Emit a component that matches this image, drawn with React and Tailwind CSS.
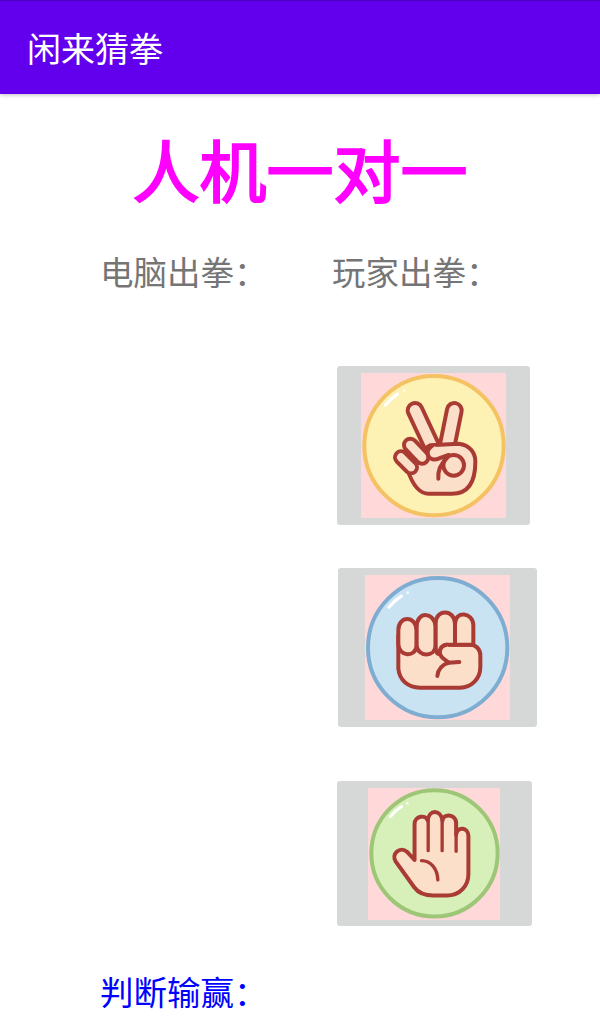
const INK = "#a93b34";
const SKIN = "#fcdfc8";

function Ball({ cx, cy, r, fill, ring }) {
  return (
    <>
      <circle cx={cx} cy={cy} r={r} fill={fill} stroke={ring} strokeWidth="12" />
      <path d={`M${cx - r * 0.7} ${cy - r * 0.58} Q${cx - r * 0.62} ${cy - r * 0.68} ${cx - r * 0.52} ${cy - r * 0.74}`} fill="none" stroke="#fff" strokeWidth="9" strokeLinecap="round" />
      <circle cx={cx - r * 0.43} cy={cy - r * 0.79} r="4" fill="#fff" opacity="0.8" />
    </>
  );
}

function Capsule({ x1, y1, x2, y2, w }) {
  return (
    <>
      <line x1={x1} y1={y1} x2={x2} y2={y2} stroke={INK} strokeWidth={w + 24} strokeLinecap="round" />
      <line x1={x1} y1={y1} x2={x2} y2={y2} stroke={SKIN} strokeWidth={w} strokeLinecap="round" />
    </>
  );
}

function Scissors() {
  return (
    <svg viewBox="122 70 435 433" className="block h-full w-full">
      <Ball cx={341} cy={287} r={209} fill="#fdf1b4" ring="#f4c263" />
      <Capsule x1={284} y1={181} x2={335} y2={290} w={32} />
      <Capsule x1={402} y1={181} x2={380} y2={290} w={32} />
      <g fill={SKIN} stroke={INK} strokeWidth="12" strokeLinejoin="round" strokeLinecap="round">
        <path d="M290 310 L330 286 L415 281 C450 285 465 310 465 335 C465 385 450 431 395 431 L325 431 C295 431 275 400 262 360 Z" />
      </g>
      <Capsule x1={242} y1={322} x2={272} y2={352} w={24} />
      <Capsule x1={270} y1={285} x2={305} y2={322} w={26} />
      <g fill={SKIN} stroke={INK} strokeWidth="12" strokeLinejoin="round" strokeLinecap="round">
        <path d="M335 288 C312 302 322 332 348 328 L385 315 L395 300 Z" stroke="none" />
        <path d="M335 288 C312 302 322 332 348 328 L385 315" fill="none" />
        <circle cx="400" cy="346" r="31" />
        <path d="M354 386 C352 362 360 342 380 324" fill="none" />
      </g>
    </svg>
  );
}

function Rock() {
  return (
    <svg viewBox="135 60 435 433" className="block h-full w-full">
      <Ball cx={353} cy={277} r={209} fill="#c9e3f3" ring="#7fadd1" />
      <g fill={SKIN} stroke={INK} strokeWidth="12" strokeLinejoin="round" strokeLinecap="round">
        <path d="M235 240 L235 340 C238 375 265 397 300 397 L420 397 C455 397 481 370 481 335 L481 300 C481 282 468 268 450 268 L380 268 L235 240 Z" />
        <path d="M235 225 C235 180 288 180 290 225 L290 270 C288 308 235 305 235 265 Z" />
        <path d="M290 215 C290 165 345 170 347 215 L347 270 C345 308 292 305 290 270 Z" />
        <path d="M347 205 C347 160 403 160 405 205 L405 268 L380 268 C365 270 358 282 360 295 C350 300 347 285 347 270 Z" />
        <path d="M405 205 C405 165 460 170 460 210 L460 268 L405 268 Z" />
        <path d="M380 268 C360 272 352 292 368 308 L386 322 L418 320" fill={SKIN} />
        <path d="M386 322 C368 328 354 342 352 362" fill="none" />
      </g>
    </svg>
  );
}

function Paper() {
  return (
    <svg viewBox="143 53 397 394" className="block h-full w-full">
      <Ball cx={343} cy={248} r={190} fill="#d7f0b9" ring="#9dc677" />
      <path
        d="M283 268 L260 243 C240 225 212 250 226 272 L282 350 C295 368 318 375 340 375 L380 375 C420 375 445 345 445 310 L445 195 C445 170 410 165 408 192 L408 155 C405 128 368 128 367 150 C362 115 325 115 323 150 C318 130 283 135 283 160 Z"
        fill={SKIN}
        stroke={INK}
        strokeWidth="12"
        strokeLinejoin="round"
      />
      <g fill="none" stroke={INK} strokeWidth="10" strokeLinecap="round">
        <path d="M324 150 L324 240" />
        <path d="M366 150 L366 240" />
        <path d="M408 190 L408 242" />
        <path d="M304 270 C332 270 352 295 353 328" />
      </g>
    </svg>
  );
}

function HandButton({ className, imageClassName, children }) {
  return (
    <div className={`flex rounded-[3px] bg-[#d6d7d7] pt-[7px] ${className}`}>
      <div className={`bg-[#ffd9d9] ${imageClassName}`}>{children}</div>
    </div>
  );
}

export default function App() {
  return (
    <div className="flex h-[1027px] w-[600px] flex-col overflow-hidden bg-white font-['Noto_Sans_CJK_SC','Noto_Sans',sans-serif]">
      <header className="flex h-[94px] shrink-0 items-center border-t border-[#4a00c0] bg-[#6200ee] pl-[27px] text-[34px] leading-none text-white shadow-[0_1px_4px_rgba(0,0,0,0.25)]">
        闲来猜拳
      </header>
      <h1 className="mt-[32px] text-center text-[67px] font-normal leading-[84px] text-[#ff00ff] [-webkit-text-stroke:2px_#ff00ff]">
        人机一对一
      </h1>
      <div className="mt-[38px] flex text-[33.5px] leading-[46px] text-[#757575]">
        <span className="ml-[100px] w-[232px]">电脑出拳：</span>
        <span>玩家出拳：</span>
      </div>
      <div className="mt-[72px] flex flex-col items-start">
        <HandButton className="ml-[337px] h-[159px] w-[193px] pl-[24px]" imageClassName="h-[145px] w-[145px]">
          <Scissors />
        </HandButton>
        <HandButton className="ml-[338px] mt-[43px] h-[159px] w-[199px] pl-[27px]" imageClassName="h-[145px] w-[145px]">
          <Rock />
        </HandButton>
        <HandButton className="ml-[337px] mt-[54px] h-[145px] w-[195px] pl-[31px]" imageClassName="h-[132px] w-[132px]">
          <Paper />
        </HandButton>
      </div>
      <div className="ml-[100px] mt-[42px] text-[33.5px] leading-[46px] text-[#0000ff]">判断输赢：</div>
    </div>
  );
}
